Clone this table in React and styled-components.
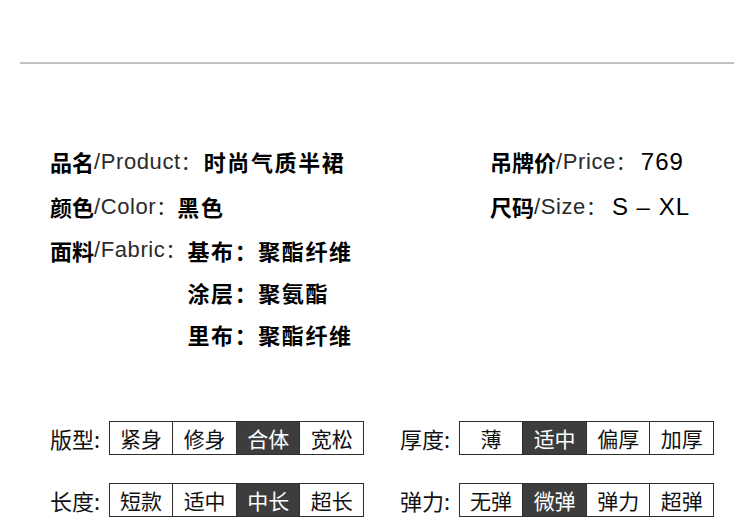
import React from 'react';
import { styled, createGlobalStyle } from 'styled-components';

const GlobalStyle = createGlobalStyle`
    body {
        margin: 0;
        background: #ffffff;
        font-family: 'Liberation Sans', 'Noto Sans CJK SC', sans-serif;
        color: #111111;
    }
`;

// Styled-Components
const Page = styled.div`
    width: 750px;
    padding-top: 62px;
`;

const Divider = styled.div`
    height: 2px;
    margin: 0 16px 0 20px;
    background: #c2c2c2;
`;

const InfoSection = styled.div`
    display: flex;
    padding: 75px 0 0 50px;
`;

const Column = styled.div`
    display: flex;
    flex-direction: column;
    width: ${props => props.width}px;
`;

const InfoRow = styled.div`
    display: flex;
    align-items: flex-start;
    line-height: ${props => props.lh || 45}px;
    white-space: nowrap;
`;

const Key = styled.span`
    font-family: 'Noto Sans CJK SC', sans-serif;
    font-weight: 700;
    font-size: 22px;
    color: #000;
`;

const En = styled.span`
    font-family: 'Liberation Sans', sans-serif;
    font-size: 22px;
    letter-spacing: 0.6px;
    color: #2a2a2a;
`;

const Colon = styled.span`
    font-family: 'Noto Sans CJK SC', sans-serif;
    font-size: 20px;
    color: #2a2a2a;
    margin-right: ${props => props.gap || 2}px;
`;

const Value = styled.span`
    font-family: 'Noto Sans CJK SC', sans-serif;
    font-weight: 700;
    font-size: 22px;
    letter-spacing: 1.6px;
    color: #000;
`;

const Number = styled.span`
    font-family: 'Liberation Sans', sans-serif;
    font-size: 24px;
    letter-spacing: 1px;
    color: #000;
`;

const FabricList = styled.div`
    display: flex;
    flex-direction: column;
`;

const SpecGrid = styled.div`
    display: grid;
    grid-template-columns: 314px 314px;
    column-gap: 36px;
    row-gap: 28px;
    padding: 66px 0 0 50px;
`;

const SpecRow = styled.div`
    display: flex;
    align-items: center;
`;

const SpecLabel = styled.div`
    width: 59px;
    font-family: 'Noto Sans CJK SC', sans-serif;
    font-size: 22px;
    line-height: 34px;
    color: #111;
`;

const Options = styled.div`
    display: flex;
    width: 256px;
    height: 34px;
    box-sizing: border-box;
    border: 1px solid #2e2e2e;
`;

const Option = styled.div`
    flex: 1;
    display: flex;
    align-items: center;
    justify-content: center;
    font-family: 'Noto Sans CJK SC', sans-serif;
    font-size: 21px;
    color: ${props => props.active ? '#ffffff' : '#111111'};
    background: ${props => props.active ? '#3d3d3d' : '#ffffff'};
    & + & {
        border-left: 1px solid #2e2e2e;
    }
`;

const specs = [
    { label: '版型', options: ['紧身', '修身', '合体', '宽松'], active: 2 },
    { label: '厚度', options: ['薄', '适中', '偏厚', '加厚'], active: 1 },
    { label: '长度', options: ['短款', '适中', '中长', '超长'], active: 2 },
    { label: '弹力', options: ['无弹', '微弹', '弹力', '超弹'], active: 1 },
];

// Components
const App = () => {
    return (
        <Page>
            <GlobalStyle />
            <Divider />
            <InfoSection>
                <Column width={440}>
                    <InfoRow>
                        <Key>品名</Key><En>/Product</En><Colon gap={3}>：</Colon>
                        <Value>时尚气质半裙</Value>
                    </InfoRow>
                    <InfoRow>
                        <Key>颜色</Key><En>/Color</En><Colon gap={1}>：</Colon>
                        <Value>黑色</Value>
                    </InfoRow>
                    <InfoRow lh={42}>
                        <Key>面料</Key><En>/Fabric</En><Colon gap={0}>：</Colon>
                        <FabricList>
                            <Value>基布：聚酯纤维</Value>
                            <Value>涂层：聚氨酯</Value>
                            <Value>里布：聚酯纤维</Value>
                        </FabricList>
                    </InfoRow>
                </Column>
                <Column width={250}>
                    <InfoRow>
                        <Key>吊牌价</Key><En>/Price</En><Colon gap={5}>：</Colon>
                        <Number>769</Number>
                    </InfoRow>
                    <InfoRow>
                        <Key>尺码</Key><En>/Size</En><Colon gap={6}>：</Colon>
                        <Number>S – XL</Number>
                    </InfoRow>
                </Column>
            </InfoSection>
            <SpecGrid>
                {specs.map(spec => (
                    <SpecRow key={spec.label}>
                        <SpecLabel>{spec.label}:</SpecLabel>
                        <Options>
                            {spec.options.map((opt, index) => (
                                <Option key={`${opt}-${index}`} active={index === spec.active}>
                                    {opt}
                                </Option>
                            ))}
                        </Options>
                    </SpecRow>
                ))}
            </SpecGrid>
        </Page>
    );
};

export default App;
